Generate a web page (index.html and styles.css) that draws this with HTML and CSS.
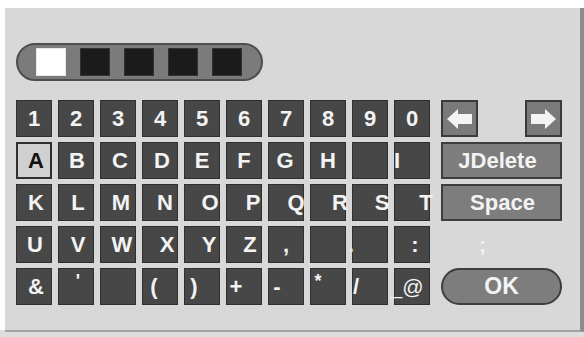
FILE: index.html
```html
<!DOCTYPE html>
<html>
<head>
<meta charset="utf-8">
<link rel="stylesheet" href="styles.css">
</head>
<body>
<div class="screen">
  <div class="panel">
    <div class="display">
      <div class="slot slot-cur"></div>
      <div class="slot"></div>
      <div class="slot"></div>
      <div class="slot"></div>
      <div class="slot"></div>
    </div>
    <div class="kbd">
      <div class="key"><span>1</span></div>
      <div class="key"><span>2</span></div>
      <div class="key"><span>3</span></div>
      <div class="key"><span>4</span></div>
      <div class="key"><span>5</span></div>
      <div class="key"><span>6</span></div>
      <div class="key"><span>7</span></div>
      <div class="key"><span>8</span></div>
      <div class="key"><span>9</span></div>
      <div class="key"><span>0</span></div>
      <div class="side arrows">
        <div class="arrow-key">
          <svg width="25" height="20" viewBox="0 0 25 20"><polygon points="0,10 11,0 11,5 25,5 25,15 11,15 11,20" fill="#f4f4f4"/></svg>
        </div>
        <div class="arrow-key">
          <svg width="25" height="20" viewBox="0 0 25 20"><polygon points="25,10 14,0 14,5 0,5 0,15 14,15 14,20" fill="#f4f4f4"/></svg>
        </div>
      </div>

      <div class="key key-sel"><span class="p2">A</span></div>
      <div class="key"><span class="p1">B</span></div>
      <div class="key"><span class="p2">C</span></div>
      <div class="key"><span class="p2">D</span></div>
      <div class="key"><span>E</span></div>
      <div class="key"><span>F</span></div>
      <div class="key"><span class="m1">G</span></div>
      <div class="key"><span>H</span></div>
      <div class="key"></div>
      <div class="key"><span class="m15">I</span></div>
      <div class="side btn">JDelete</div>

      <div class="key"><span class="p2">K</span></div>
      <div class="key"><span class="p2">L</span></div>
      <div class="key"><span class="p3">M</span></div>
      <div class="key"><span class="p5">N</span></div>
      <div class="key"><span class="p8">O</span></div>
      <div class="key"><span class="p9">P</span></div>
      <div class="key"><span class="p10">Q</span></div>
      <div class="key"><span class="p12">R</span></div>
      <div class="key"><span class="p12">S</span></div>
      <div class="key"><span class="p14">T</span></div>
      <div class="side btn btn-space">Space</div>

      <div class="key"><span class="p1">U</span></div>
      <div class="key"><span class="p2">V</span></div>
      <div class="key"><span class="p4">W</span></div>
      <div class="key"><span class="p7">X</span></div>
      <div class="key"><span class="p7">Y</span></div>
      <div class="key"><span class="p6">Z</span></div>
      <div class="key"><span>,</span></div>
      <div class="key"></div>
      <div class="key"><span class="m19 faint">.</span></div>
      <div class="key"><span class="p3">:</span></div>
      <div class="side semi"><span>;</span></div>

      <div class="key"><span class="p2">&amp;</span></div>
      <div class="key"><span class="p2 small">'</span></div>
      <div class="key"></div>
      <div class="key"><span class="m6">(</span></div>
      <div class="key"><span class="m8">)</span></div>
      <div class="key"><span class="m8">+</span></div>
      <div class="key"><span class="m9">-</span></div>
      <div class="key"><span class="m10 up">*</span></div>
      <div class="key"><span class="m14">/</span></div>
      <div class="key"><span class="m5 at">_@</span></div>
      <div class="side ok">OK</div>
    </div>
  </div>
</div>
</body>
</html>
```

FILE: styles.css
```css
html, body {
  margin: 0;
  padding: 0;
  background: #ffffff;
}

.screen {
  width: 584px;
  height: 337px;
  padding: 8px 0 0 5px;
  box-sizing: border-box;
  overflow: hidden;
  background: linear-gradient(#ffffff 0, #ffffff 330px, #dedede 330px);
}

.panel {
  width: 579px;
  height: 324px;
  box-sizing: border-box;
  background: #d8d8d8;
  border-right: 4px solid #8c8c8c;
  border-bottom: 2px solid #a2a2a2;
  padding: 35px 0 0 11px;
  font-family: "Liberation Sans", Arial, sans-serif;
  font-weight: bold;
}

.display {
  width: 247px;
  height: 38px;
  box-sizing: border-box;
  background: #7b7b7b;
  border: 2px solid #4e4e4e;
  border-radius: 19px;
  display: flex;
  align-items: center;
  gap: 14px;
  padding-left: 18px;
}

.slot {
  width: 30px;
  height: 28px;
  box-sizing: border-box;
  background: #1b1b1b;
  border: 1px solid #333;
}

.slot-cur {
  background: #ffffff;
  border-color: #e8e8e8;
}

.kbd {
  margin-top: 19px;
  display: grid;
  grid-template-columns: repeat(10, 36px) 126px;
  grid-auto-rows: 37px;
  column-gap: 6px;
  row-gap: 5px;
}

.key {
  box-sizing: border-box;
  background: #474747;
  border: 1px solid #2f2f2f;
  display: flex;
  align-items: center;
  justify-content: center;
  color: #f3f3f3;
  font-size: 22px;
  line-height: 1;
  white-space: nowrap;
}

.key span {
  display: block;
}

.key-sel {
  background: #d0d0d0;
  border: 2px solid #303030;
  color: #111;
}

.side {
  margin-left: 5px;
  width: 121px;
}

.arrows {
  display: flex;
  justify-content: space-between;
}

.arrow-key {
  width: 37px;
  height: 37px;
  box-sizing: border-box;
  background: #7a7a7a;
  border: 2px solid #3a3a3a;
  display: flex;
  align-items: center;
  justify-content: center;
}

.btn {
  box-sizing: border-box;
  background: #7d7d7d;
  border: 2px solid #3e3e3e;
  color: #f3f3f3;
  font-size: 22px;
  display: flex;
  align-items: center;
  justify-content: center;
  padding-right: 8px;
}

.btn-space {
  padding-right: 0;
  padding-left: 2px;
}

.semi {
  display: flex;
  align-items: center;
  justify-content: center;
  color: #f2f2f2;
  font-size: 21px;
  padding-right: 38px;
  box-sizing: border-box;
}

.ok {
  box-sizing: border-box;
  background: #7d7d7d;
  border: 2px solid #3e3e3e;
  border-radius: 19px;
  color: #f3f3f3;
  font-size: 23px;
  display: flex;
  align-items: center;
  justify-content: center;
}

.faint { color: #e6e6e6; }
.small { font-size: 18px; transform: translateY(-6px); }
.up { font-size: 18px; }
.at { font-weight: normal; font-size: 21px; }

.p1 { transform: translateX(1px); }
.p2 { transform: translateX(2px); }
.p3 { transform: translateX(3px); }
.p4 { transform: translateX(4px); }
.p5 { transform: translateX(5px); }
.p6 { transform: translateX(6px); }
.p7 { transform: translateX(7px); }
.p8 { transform: translateX(8px); }
.p9 { transform: translateX(9px); }
.p10 { transform: translateX(10px); }
.p12 { transform: translateX(12px); }
.p14 { transform: translateX(14px); }
.m1 { transform: translateX(-1px); }
.m5 { transform: translateX(-5px); }
.m6 { transform: translateX(-6px); }
.m8 { transform: translateX(-8px); }
.m9 { transform: translateX(-9px); }
.m10 { transform: translateX(-10px) translateY(-6px); }
.m14 { transform: translateX(-14px); }
.m15 { transform: translateX(-15px); }
.m19 { transform: translateX(-19px); }
.p2.small { transform: translate(2px, -6px); }
```
